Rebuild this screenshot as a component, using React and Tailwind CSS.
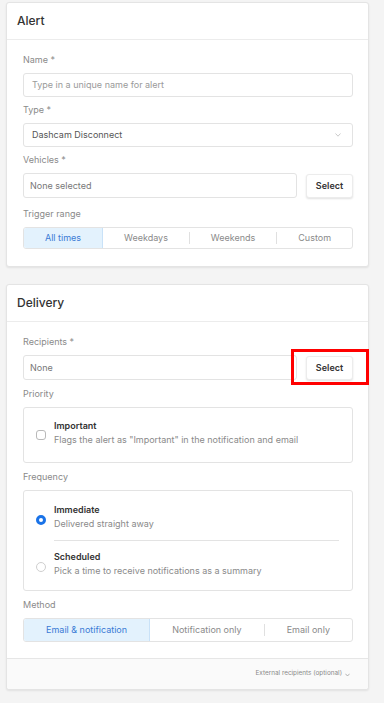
import React from "react";

const font = { fontFamily: "Inter, 'Noto Sans', sans-serif" };

export default function App() {
  return (
    <div
      className="min-h-[703px] w-[384px] bg-[#f4f4f4] pt-[2px] pl-[6px] pr-[15px] pb-4 text-[9px] text-[#333]"
      style={font}
    >
      {/* Alert */}
      <Card title="Alert">
        <div className="pl-[16px] pr-[15px] pt-[14px] pb-[17px]">
          <Field label="Name *">
            <div className="flex h-[24px] items-center rounded-[3px] border border-[#e3e3e3] bg-white px-[8px] text-[#9a9a9a]">
              Type in a unique name for alert
            </div>
          </Field>
          <Field label="Type *">
            <div className="flex h-[24px] items-center justify-between rounded-[3px] border border-[#e3e3e3] bg-white pl-[8px] pr-[11px] text-[#555]">
              <span>Dashcam Disconnect</span>
              <svg width="6" height="4" viewBox="0 0 6 4" fill="none">
                <path d="M0.5 0.5 L3 3.2 L5.5 0.5" stroke="#bdbdbd" strokeWidth="0.8" />
              </svg>
            </div>
          </Field>
          <Field label="Vehicles *">
            <SelectRow placeholder="None selected" />
          </Field>
          <div className="pt-[3px]">
            <Label>Trigger range</Label>
            <Segmented items={["All times", "Weekdays", "Weekends", "Custom"]} h="h-[22px]" />
          </div>
        </div>
      </Card>

      <div className="h-[17px]" />

      {/* Delivery */}
      <Card title="Delivery">
        <div className="pl-[16px] pr-[15px] pt-[14px] pb-[16px]">
          <Field label="Recipients *" gap="mb-[8px]">
            <div className="relative">
              <SelectRow placeholder="None" />
              <div className="pointer-events-none absolute left-[268px] top-[-6px] h-[36px] w-[78px] border-[3px] border-[#ff0000]" />
            </div>
          </Field>

          <Field label="Priority" gap="mb-[8px]">
            <div className="flex h-[56px] items-center gap-[8px] rounded-[3px] border border-[#e3e3e3] bg-white pl-[12px] pr-[13px]">
              <div className="h-[10px] w-[10px] shrink-0 rounded-[3px] border border-[#b9b9b9] bg-white" />
              <div className="-mt-[4px]">
                <p className="font-semibold leading-[12px] text-[#333]">Important</p>
                <p className="mt-[2px] leading-[12px] text-[#8a8a8a]">
                  Flags the alert as "Important" in the notification and email
                </p>
              </div>
            </div>
          </Field>

          <Field label="Frequency" gap="mb-[8px]">
            <div className="rounded-[3px] border border-[#e3e3e3] bg-white pl-[12px] pr-[13px] pt-[13px] pb-[13px]">
              <RadioOption
                selected
                title="Immediate"
                desc="Delivered straight away"
              />
              <div className="my-[10px] ml-[18px] h-px bg-[#e3e3e3]" />
              <RadioOption
                title="Scheduled"
                desc="Pick a time to receive notifications as a summary"
              />
            </div>
          </Field>

          <div>
            <Label>Method</Label>
            <Segmented
              items={["Email & notification", "Notification only", "Email only"]}
              h="h-[24px]"
            />
          </div>
        </div>

        <div className="flex h-[31px] items-center justify-end gap-[3px] rounded-b-[3px] border-t border-[#e6e6e6] bg-[#fafafa] pr-[18px] text-[6.4px] text-[#8a8a8a]">
          <span>External recipients (optional)</span>
          <svg width="5" height="4" viewBox="0 0 6 4" fill="none" className="mt-[1px]">
            <path d="M0.5 0.5 L3 3.2 L5.5 0.5" stroke="#9a9a9a" strokeWidth="0.9" />
          </svg>
        </div>
      </Card>
    </div>
  );
}

// --- Sub-componentes ---

function Card({ title, children }) {
  return (
    <div className="rounded-[3px] border border-[#e4e4e4] bg-white shadow-[0_1px_2px_rgba(0,0,0,0.08)]">
      <div className="flex h-[37px] items-center border-b border-[#ececec] px-[10px] text-[12px] font-medium text-[#333]">
        {title}
      </div>
      {children}
    </div>
  );
}

function Label({ children }) {
  return <p className="mb-[7px] h-[12px] leading-[12px] text-[#8a8a8a]">{children}</p>;
}

function Field({ label, children, gap = "mb-[7px]" }) {
  return (
    <div className={gap}>
      <Label>{label}</Label>
      {children}
    </div>
  );
}

function SelectRow({ placeholder }) {
  return (
    <div className="flex h-[25px] items-center gap-[9px]">
      <div className="flex h-[25px] flex-1 items-center rounded-[3px] border border-[#e3e3e3] bg-white px-[6px] text-[#777]">
        {placeholder}
      </div>
      <button className="h-[24px] w-[47px] shrink-0 rounded-[3px] border border-[#ececec] bg-white text-[9px] font-semibold text-[#333] shadow-[0_1px_2px_rgba(0,0,0,0.12)]">
        Select
      </button>
    </div>
  );
}

function Segmented({ items, h }) {
  return (
    <div className={`flex ${h} overflow-hidden rounded-[3px] border border-[#e3e3e3] bg-white`}>
      {items.map((it, i) => (
        <React.Fragment key={it}>
          {i > 1 && <span className="my-auto h-[12px] w-px shrink-0 bg-[#e0e0e0]" />}
          <div
            className={
              i === 0
                ? "flex flex-auto items-center justify-center border-r border-[#c9e2f8] bg-[#e3f2fd] text-[#3a7bd5]"
                : "flex flex-auto items-center justify-center text-[#8a8a8a]"
            }
          >
            {it}
          </div>
        </React.Fragment>
      ))}
    </div>
  );
}

function RadioOption({ selected, title, desc }) {
  return (
    <div className="flex items-center gap-[8px]">
      <div
        className={
          selected
            ? "mt-[5px] h-[10px] w-[10px] shrink-0 rounded-full border-[3px] border-[#1a73e8] bg-white"
            : "mt-[5px] h-[10px] w-[10px] shrink-0 rounded-full border border-[#cfcfcf] bg-white"
        }
      />
      <div>
        <p className="font-semibold leading-[12px] text-[#333]">{title}</p>
        <p className="mt-[2px] leading-[12px] text-[#8a8a8a]">{desc}</p>
      </div>
    </div>
  );
}
